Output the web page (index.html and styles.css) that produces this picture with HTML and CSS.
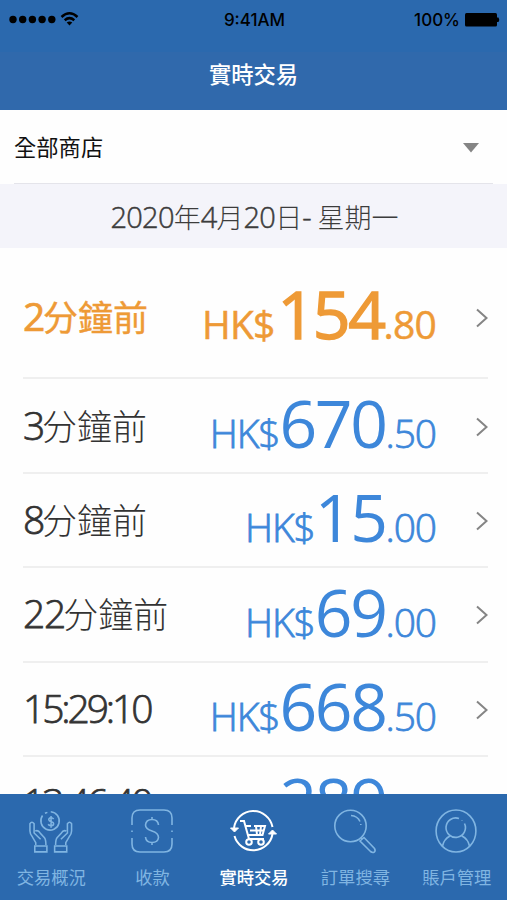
FILE: index.html
```html
<!DOCTYPE html>
<html lang="zh-Hant-HK">
<head>
<meta charset="utf-8">
<title>實時交易</title>
<link rel="stylesheet" href="styles.css">
</head>
<body>
<div class="app">
  <div class="status">
    <div class="signal">
      <svg width="72" height="16" viewBox="0 0 72 16">
        <circle cx="4" cy="8.5" r="3.7"/><circle cx="13.7" cy="8.5" r="3.7"/><circle cx="23.4" cy="8.5" r="3.7"/><circle cx="33.1" cy="8.5" r="3.7"/><circle cx="42.8" cy="8.5" r="3.7"/>
        <path d="M52.500 6Q60.500 -1.500 68.500 6M55.700 9.200Q60.500 5 65.300 9.200" fill="none" stroke="#000" stroke-width="2.5"/>
        <path d="M57.700 11.500Q60.500 9.300 63.300 11.500L60.500 14.500Z"/>
      </svg>
    </div>
    <div class="clock">9:41AM</div>
    <div class="battery">100%
      <svg width="35" height="14" viewBox="0 0 35 14"><rect width="32" height="13.500" rx="1.500"/><path d="M32 4.500h1.500q1.500 2.300 0 4.600H32z"/></svg>
    </div>
  </div>
  <header class="title">實時交易</header>
  <div class="store"><span>全部商店</span>
    <svg width="16" height="10" viewBox="0 0 16 10"><path d="M0 0h16L8 9.500z" fill="#858585"/></svg>
  </div>
  <div class="date"><span class="dn">2020</span>年<span class="dn">4</span>月<span class="dn">20</span>日<span class="dn">- </span>星期一</div>
  <main class="list">
    <div class="row latest"><div class="when"><span class="n">2</span>分鐘前</div><div class="amount">HK$<b>154</b>.80</div><svg class="chev" viewBox="0 0 12 20"><path d="M1 1.500 10.500 10 1 18.500"/></svg></div>
    <div class="row"><div class="when"><span class="n">3</span>分鐘前</div><div class="amount">HK$<b>670</b>.50</div><svg class="chev" viewBox="0 0 12 20"><path d="M1 1.500 10.500 10 1 18.500"/></svg></div>
    <div class="row"><div class="when"><span class="n">8</span>分鐘前</div><div class="amount">HK$<b>15</b>.00</div><svg class="chev" viewBox="0 0 12 20"><path d="M1 1.500 10.500 10 1 18.500"/></svg></div>
    <div class="row"><div class="when"><span class="n">22</span>分鐘前</div><div class="amount">HK$<b>69</b>.00</div><svg class="chev" viewBox="0 0 12 20"><path d="M1 1.500 10.500 10 1 18.500"/></svg></div>
    <div class="row"><div class="when"><span class="t">15:29:10</span></div><div class="amount">HK$<b>668</b>.50</div><svg class="chev" viewBox="0 0 12 20"><path d="M1 1.500 10.500 10 1 18.500"/></svg></div>
    <div class="row"><div class="when"><span class="t">13:46:40</span></div><div class="amount">HK$<b>289</b>.00</div><svg class="chev" viewBox="0 0 12 20"><path d="M1 1.500 10.500 10 1 18.500"/></svg></div>
  </main>
  <nav class="tabs">
    <div class="tab">
      <svg viewBox="-.5 -.8 47.500 47.500"><path d="M14.500 7A9.500 9.500 0 1 0 23 3M19.500 3.700 17 4.700M26 10.500C24.500 8.500 20.500 9 21 11.500S26 13 26 15.500 21.500 18 20.300 16M23.300 7.500v12"/><path d="M7.500 37.500V35L4 29Q1.500 26 1.500 23V15.500Q3.500 12.500 5.800 15.500V25L12.500 31.500M7 23Q10 21.500 12 25L16.500 30Q18 32 18 37.500M6.500 38.500H19V44.500H6.500Z"/><path d="M38.500 37.500V35L42 29Q44.500 26 44.500 23V15.500Q42.500 12.500 40.200 15.500V25L33.500 31.500M39 23Q36 21.500 34 25L29.500 30Q28 32 28 37.500M27 38.500H39.500V44.500H27Z"/></svg>
      <span>交易概況</span></div>
    <div class="tab">
      <svg viewBox="0 0 46 46"><path d="M3 17V10Q3 2 11 2H35Q43 2 43 10V17M3 30V36Q3 44 11 44H35Q43 44 43 36V30M3 22.500v1.500M43 22.500v1.500M29.500 17Q29 11.500 23 11.500T16.500 17Q16.500 21 23 23T29.500 29.500Q29 34.500 23 34.500T16.500 29M23 9v2.500M23 34.500v2.500"/></svg>
      <span>收款</span></div>
    <div class="tab active">
      <svg viewBox="0 0 46 46"><path d="M4 20A19.500 19.500 0 0 1 42.500 19M42.500 26A19.500 19.500 0 0 1 4.500 28M10 13H14L19 31H34M16 18H21M24 18H35L32.500 27H18.500M20 22.500H33.500M26 18 27 27M31 18 30 27"/><path d="M.5 20H8.500L4.500 24ZM38.500 26H46.500L42.500 22Z" fill="currentColor" stroke-width="1"/><circle cx="19" cy="34" r="2.800"/><circle cx="31" cy="34" r="2.800"/></svg>
      <span>實時交易</span></div>
    <div class="tab">
      <svg viewBox="0 0 46 46"><circle cx="18.500" cy="18" r="15.700"/><path d="M19 7.500Q25.500 8 28 13.500M28.800 16v1M28 33 32 29.500 42.500 40.500Q44 43 42 44.200 40.500 45 38.500 43.500ZM29 30 30.500 31.500"/></svg>
      <span>訂單搜尋</span></div>
    <div class="tab">
      <svg viewBox="0 0 46 46"><ellipse cx="23" cy="23" rx="19.900" ry="21"/><path d="M31.500 15.500A9.700 9.700 0 1 1 26 10.500M29 12v.5M17 28Q11 31 9.500 38M29 28Q35 31 36.500 38"/></svg>
      <span>賬戶管理</span></div>
  </nav>
</div>
</body>
</html>
```
FILE: styles.css
```css
* { box-sizing: border-box; }
body { margin: 0; background: #fefefe; font-family: "Open Sans", "Noto Sans CJK TC", sans-serif; }
.app { width: 507px; height: 900px; display: flex; flex-direction: column; overflow: hidden; }
.status { flex: none; height: 52px; padding: 0 7px 0 9px; background: #2b69ae; display: grid; grid-template-columns: 1fr auto 1fr; font: 500 17px/38px Inter, sans-serif; color: #000; }
.signal { display: flex; align-items: center; height: 38px; }
.clock { padding-top: 1px; }
.battery { display: flex; align-items: center; justify-content: flex-end; gap: 5px; height: 39px; }
.title { flex: none; height: 58px; background: #3069ac; color: #fff; text-align: center; font-size: 22.300px; font-weight: 500; line-height: 46px; }
.store { flex: none; height: 74px; margin: 0 14px; padding: 2px 14px 0 0; border-bottom: 1px solid #e4e4ea; display: flex; align-items: center; justify-content: space-between; font-size: 22.300px; line-height: 71px; color: #111; }
.date { flex: none; height: 64px; padding: 2px 0 0 2px; background: #f4f4fa; text-align: center; font-size: 27px; font-weight: 300; line-height: 63px; color: #3c3c3c; }
.dn { font-size: 29px; line-height: 0; letter-spacing: -.750px; -webkit-text-stroke: .5px currentColor; }
.list { flex: 1; min-height: 0; overflow: hidden; padding: 0 19px 0 23px; }
.row { height: 94.400px; border-bottom: 2px solid #efefef; display: flex; align-items: center; }
.latest { height: 131.400px; padding-top: 8px; }
.when { flex: 1; padding-top: 2px; font-size: 35px; font-weight: 300; line-height: 94px; color: #333; }
.n { font-size: 39px; line-height: 0; letter-spacing: -1.200px; margin-right: -2px; -webkit-text-stroke: .75px currentColor; }
.t { font-size: 39px; line-height: 0; letter-spacing: -3.100px; -webkit-text-stroke: .75px currentColor; }
.amount { font-size: 39px; font-weight: 300; line-height: 94px; letter-spacing: -1.100px; color: #3d87da; margin-right: 40px; padding-top: 15px; -webkit-text-stroke: .8px currentColor; }
.amount b { font-size: 66px; font-weight: 400; line-height: 0; letter-spacing: -2.400px; -webkit-text-stroke: 0; }
.latest .when, .latest .amount { color: #ee9a36; font-weight: 400; }
.latest .when { -webkit-text-stroke: .4px currentColor; }
.latest .n { -webkit-text-stroke: .7px currentColor; margin-right: -1px; }
.latest .amount { -webkit-text-stroke: .5px currentColor; letter-spacing: -.800px; }
.latest .amount b { -webkit-text-stroke: 1.500px currentColor; margin-left: 3px; }
.chev { width: 12px; height: 20px; margin-top: 2px; fill: none; stroke: #858585; stroke-width: 2; }
.tabs { flex: none; height: 106px; background: #2b69ae; display: grid; grid-template-columns: repeat(5, 1fr); color: #80b5e2; }
.tab { display: flex; flex-direction: column; align-items: center; padding: 14px 0 0 1px; font-size: 17.300px; line-height: 24px; }
.tab svg { width: 46px; height: 46px; margin: 0 1px 12px 0; overflow: visible; fill: none; stroke: currentColor; stroke-width: 1.600; }
.active { color: #fff; font-weight: 500; }
.active svg { stroke-width: 2; }
```
